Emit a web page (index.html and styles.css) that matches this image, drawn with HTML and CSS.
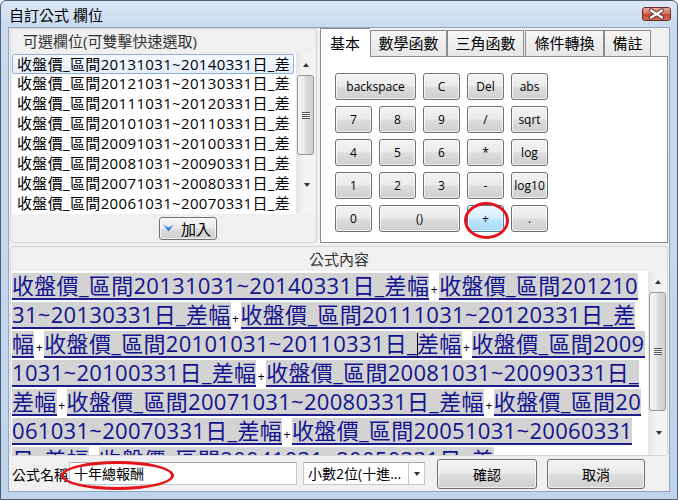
FILE: index.html
```html
<!DOCTYPE html>
<html lang="zh-Hant">
<head>
    <meta charset="UTF-8">
    <meta name="viewport" content="width=device-width, initial-scale=1.0">
    <title>自訂公式 欄位</title>
    <link rel="stylesheet" href="styles.css">
</head>
<body>
    <div class="window">
        <div class="titlebar">
            <span class="title">自訂公式 欄位</span>
            <span class="close">
                <svg width="29" height="14" viewBox="0 0 29 14">
                    <path d="M9 3.5 L20 10.5 M20 3.5 L9 10.5" stroke="#5b2a24" stroke-width="4.2" stroke-linecap="round"/>
                    <path d="M9 3.5 L20 10.5 M20 3.5 L9 10.5" stroke="#fff" stroke-width="2.4" stroke-linecap="round"/>
                </svg>
            </span>
        </div>

        <div class="client">
            <div class="top">
                <!-- field list -->
                <div class="fields">
                    <div class="fields-head">可選欄位(可雙擊快速選取)</div>
                    <div class="listbox">
                        <ul class="items">
                            <li class="selected">收盤價_區間20131031~20140331日_差</li>
                            <li>收盤價_區間20121031~20130331日_差</li>
                            <li>收盤價_區間20111031~20120331日_差</li>
                            <li>收盤價_區間20101031~20110331日_差</li>
                            <li>收盤價_區間20091031~20100331日_差</li>
                            <li>收盤價_區間20081031~20090331日_差</li>
                            <li>收盤價_區間20071031~20080331日_差</li>
                            <li>收盤價_區間20061031~20070331日_差</li>
                        </ul>
                        <div class="vscroll list-scroll">
                            <span class="arrow"><i class="tri up"></i></span>
                            <span class="thumb"></span>
                            <span class="arrow bottom"><i class="tri down"></i></span>
                        </div>
                    </div>
                    <div class="fields-foot">
                        <button class="btn add">
                            <svg width="11" height="8" viewBox="0 0 11 8">
                                <defs>
                                    <linearGradient id="blue" x1="0" y1="0" x2="0" y2="1">
                                        <stop offset="0" stop-color="#6fb2f5"/>
                                        <stop offset="1" stop-color="#1f5fc4"/>
                                    </linearGradient>
                                </defs>
                                <polygon points="0,0.5 5.5,3.2 11,0.5 5.5,7.5" fill="url(#blue)"/>
                            </svg>
                            加入
                        </button>
                    </div>
                </div>

                <!-- calculator tabs -->
                <div class="tabs">
                    <div class="tabrow">
                        <span class="tab active">基本</span>
                        <span class="tab t-math">數學函數</span>
                        <span class="tab t-trig">三角函數</span>
                        <span class="tab t-cond">條件轉換</span>
                        <span class="tab t-note">備註</span>
                    </div>
                    <div class="tabpanel">
                        <div class="keys">
                            <button class="btn key wide">backspace</button>
                            <button class="btn key">C</button>
                            <button class="btn key">Del</button>
                            <button class="btn key">abs</button>
                            <button class="btn key">7</button>
                            <button class="btn key">8</button>
                            <button class="btn key">9</button>
                            <button class="btn key">/</button>
                            <button class="btn key">sqrt</button>
                            <button class="btn key">4</button>
                            <button class="btn key">5</button>
                            <button class="btn key">6</button>
                            <button class="btn key">*</button>
                            <button class="btn key">log</button>
                            <button class="btn key">1</button>
                            <button class="btn key">2</button>
                            <button class="btn key">3</button>
                            <button class="btn key">-</button>
                            <button class="btn key">log10</button>
                            <button class="btn key">0</button>
                            <button class="btn key wide">()</button>
                            <button class="btn key hover">+</button>
                            <button class="btn key">.</button>
                        </div>
                    </div>
                </div>
            </div>

            <!-- formula -->
            <div class="formula">
                <div class="formula-head">公式內容</div>
                <div class="formula-body">
                    <div class="formula-text">
                        <div class="fline"><span class="tok">收盤價_區間20131031~20140331日_差幅</span><span class="op">+</span><span class="tok">收盤價_區間201210</span></div>
                        <div class="fline"><span class="tok">31~20130331日_差幅</span><span class="op">+</span><span class="tok">收盤價_區間20111031~20120331日_差</span></div>
                        <div class="fline"><span class="tok">幅</span><span class="op">+</span><span class="tok">收盤價_區間20101031~20110331日_<i class="caret"></i>差幅</span><span class="op">+</span><span class="tok">收盤價_區間2009</span></div>
                        <div class="fline"><span class="tok">1031~20100331日_差幅</span><span class="op">+</span><span class="tok">收盤價_區間20081031~20090331日_</span></div>
                        <div class="fline"><span class="tok">差幅</span><span class="op">+</span><span class="tok">收盤價_區間20071031~20080331日_差幅</span><span class="op">+</span><span class="tok">收盤價_區間20</span></div>
                        <div class="fline"><span class="tok">061031~20070331日_差幅</span><span class="op">+</span><span class="tok">收盤價_區間20051031~20060331</span></div>
                        <div class="fline"><span class="tok">日_差幅</span><span class="op">+</span><span class="tok">收盤價_區間20041031~20050331日_差</span></div>
                    </div>
                    <div class="vscroll formula-scroll">
                        <span class="arrow"><i class="tri up"></i></span>
                        <span class="thumb"></span>
                        <span class="arrow bottom"><i class="tri down"></i></span>
                    </div>
                </div>
            </div>

            <!-- name / format / actions -->
            <div class="bottom">
                <span class="name-label">公式名稱</span>
                <div class="textbox">十年總報酬</div>
                <div class="combo">
                    <span class="combo-text">小數2位(十進...</span>
                    <span class="combo-arrow"><i class="tri down"></i></span>
                </div>
                <button class="btn action ok">確認</button>
                <button class="btn action">取消</button>
            </div>
        </div>

        <!-- red annotation rings -->
        <div class="mark mark-plus"></div>
        <div class="mark mark-name"></div>
    </div>
</body>
</html>
```

FILE: styles.css
```css
body {
    margin: 0;
    background: #fff;
}

.window {
    position: relative;
    width: 678px;
    height: 500px;
    box-sizing: border-box;
    border: 1px solid #4e5e73;
    border-radius: 6px 6px 0 0;
    background: linear-gradient(#dce7f5, #c9daef 26px, #bed3ec);
    display: flex;
    flex-direction: column;
    font-family: "Open Sans", "Noto Sans CJK TC", sans-serif;
    color: #000;
}

/* title bar */
.titlebar {
    height: 26px;
    flex-shrink: 0;
    display: flex;
    align-items: center;
    padding-left: 8px;
}

.title {
    font-size: 15px;
}

.close {
    margin-left: auto;
    margin-right: 6px;
    width: 29px;
    height: 14px;
    box-sizing: border-box;
    border: 1px solid #6b2b24;
    border-radius: 3px;
    background: linear-gradient(#e9a99b, #d27565 45%, #c54530 55%, #d0705a);
    display: flex;
}

.close svg {
    margin: -1px;
}

/* client area */
.client {
    flex: 1;
    margin: 0 7px 7px;
    border: 1px solid #8fa5c2;
    background: #f0f0f0;
    padding: 0 1px;
    display: flex;
    flex-direction: column;
}

.top {
    height: 215px;
    display: flex;
    gap: 3px;
}

/* field list group */
.fields {
    width: 307px;
    box-sizing: border-box;
    border: 1px solid #d5d5d5;
    border-radius: 3px;
    display: flex;
    flex-direction: column;
}

.fields-head {
    height: 25px;
    line-height: 25px;
    padding-left: 12px;
    font-size: 15px;
    color: #333;
}

.listbox {
    height: 160px;
    margin: 0 1px;
    background: #fff;
    display: flex;
}

.items {
    flex: 1;
    margin: 0;
    padding: 0 2px 0 0;
    list-style: none;
}

.items li {
    height: 20px;
    line-height: 19px;
    padding-left: 5px;
    font-size: 15px;
    letter-spacing: 0.35px;
    white-space: nowrap;
    box-sizing: border-box;
}

.items li.selected {
    border: 1px solid #8fb2dc;
    border-radius: 2px;
    padding-left: 4px;
    background: linear-gradient(#f6faff, #e4eefb);
}

.fields-foot {
    flex: 1;
    display: flex;
    align-items: center;
    padding-left: 148px;
}

/* scrollbars */
.vscroll {
    width: 19px;
    display: flex;
    flex-direction: column;
    align-items: center;
    background: linear-gradient(to right, #e5e5e5, #f3f3f3 40%, #f3f3f3);
}

.arrow {
    height: 21px;
    width: 100%;
    display: flex;
    align-items: center;
    justify-content: center;
}

.arrow.bottom {
    margin-top: auto;
}

.tri {
    width: 0;
    height: 0;
    border-left: 3.5px solid transparent;
    border-right: 3.5px solid transparent;
}

.tri.up {
    border-bottom: 4px solid #333;
}

.tri.down {
    border-top: 4px solid #333;
}

.thumb {
    width: 17px;
    box-sizing: border-box;
    border: 1px solid #999;
    border-radius: 3px;
    background: linear-gradient(to right, #f4f4f4, #e8e8e8 50%, #dadada 50%, #d2d2d2);
    display: flex;
    align-items: center;
    justify-content: center;
}

.thumb::after {
    content: "";
    width: 8px;
    height: 7px;
    background: repeating-linear-gradient(#555 0 1px, #f5f5f5 1px 2px);
}

.list-scroll .thumb {
    height: 80px;
}

.formula-scroll .thumb {
    height: 119px;
}

/* buttons */
.btn {
    font-family: inherit;
    color: #000;
    padding: 0;
    border: 1px solid #707070;
    border-radius: 3px;
    background: linear-gradient(#f3f3f3, #ebebeb 48%, #dddddd 52%, #cfcfcf);
    box-shadow: inset 0 0 0 1px rgba(255, 255, 255, 0.7);
    cursor: default;
}

.add {
    width: 58px;
    height: 23px;
    font-size: 15px;
    display: flex;
    align-items: center;
    justify-content: center;
    gap: 7px;
    padding-right: 2px;
}

/* tabs */
.tabs {
    width: 348px;
    display: flex;
    flex-direction: column;
}

.tabrow {
    height: 28px;
    display: flex;
    align-items: flex-end;
}

.tab {
    height: 26px;
    box-sizing: border-box;
    border: 1px solid #898c95;
    border-bottom: none;
    background: linear-gradient(#f6f6f6, #e6e6e6);
    font-size: 15px;
    line-height: 25px;
    text-align: center;
}

.tab.active {
    width: 50px;
    height: 29px;
    margin-bottom: -1px;
    position: relative;
    background: #fff;
    line-height: 28px;
    text-align: left;
    padding-left: 9px;
    border-right: none;
}

.t-math {
    width: 77px;
}

.t-trig {
    width: 77px;
}

.t-cond {
    width: 79px;
    margin-left: 1px;
}

.t-note {
    width: 47px;
}

.tabpanel {
    flex: 1;
    border: 1px solid #898c95;
    background: #fff;
    padding: 16px 0 0 14px;
}

.keys {
    display: grid;
    grid-template-columns: repeat(5, 37px);
    grid-auto-rows: 27px;
    gap: 6px 7px;
}

.key {
    font-size: 12px;
    line-height: 25px;
}

.key.wide {
    grid-column: span 2;
}

.key.hover {
    border-color: #3c7fb1;
    background: linear-gradient(#eaf6fd, #d9f0fc 48%, #bee6fd 52%, #a7d9f5);
}

/* formula group */
.formula {
    height: 210px;
    margin-top: 3px;
    box-sizing: border-box;
    border: 1px solid #d5d5d5;
    border-radius: 3px;
    display: flex;
    flex-direction: column;
}

.formula-head {
    height: 24px;
    line-height: 24px;
    text-align: center;
    font-size: 15px;
    color: #333;
}

.formula-body {
    flex: 1;
    display: flex;
    min-height: 0;
}

.formula-text {
    flex: 1;
    background: #fff;
    overflow: hidden;
    padding: 2px 0 0 1px;
}

.fline {
    display: flex;
    height: 27px;
    margin-bottom: 2px;
    white-space: nowrap;
}

.tok {
    display: block;
    height: 27px;
    box-sizing: border-box;
    background: #d3d3d3;
    border-bottom: 2px solid #1c1c8c;
    color: #12128e;
    font-size: 22px;
    line-height: 25px;
    letter-spacing: 0.3px;
}

.op {
    display: block;
    width: 10px;
    text-align: center;
    font-size: 12px;
    line-height: 33px;
    height: 27px;
}

.caret {
    display: inline-block;
    width: 1px;
    height: 25px;
    margin-right: -1px;
    background: #000;
    vertical-align: -6px;
}

/* bottom row */
.bottom {
    flex: 1;
    display: flex;
    align-items: center;
    padding-left: 2px;
    font-size: 14px;
}

.name-label {
    width: 57px;
    white-space: nowrap;
}

.textbox {
    width: 228px;
    height: 23px;
    box-sizing: border-box;
    border: 1px solid #c3c6ce;
    border-top-color: #abadb3;
    background: #fff;
    padding-left: 4px;
    line-height: 21px;
}

.combo {
    width: 122px;
    height: 23px;
    margin-left: 6px;
    box-sizing: border-box;
    border: 1px solid #c3c6ce;
    border-top-color: #abadb3;
    background: #fff;
    display: flex;
}

.combo-text {
    flex: 1;
    padding-left: 4px;
    line-height: 21px;
    white-space: nowrap;
}

.combo-arrow {
    width: 15px;
    border-left: 1px solid #c8c8c8;
    display: flex;
    align-items: center;
    justify-content: center;
}

.action {
    height: 30px;
    width: 98px;
    margin-left: 10px;
    font-size: 14px;
}

.action.ok {
    width: 100px;
    margin-left: 12px;
}

/* annotation rings */
.mark {
    position: absolute;
    box-sizing: border-box;
    border: 3px solid #e3151b;
    border-radius: 50%;
}

.mark-plus {
    left: 463px;
    top: 201px;
    width: 45px;
    height: 37px;
}

.mark-name {
    left: 60px;
    top: 460px;
    width: 113px;
    height: 29px;
}
```
